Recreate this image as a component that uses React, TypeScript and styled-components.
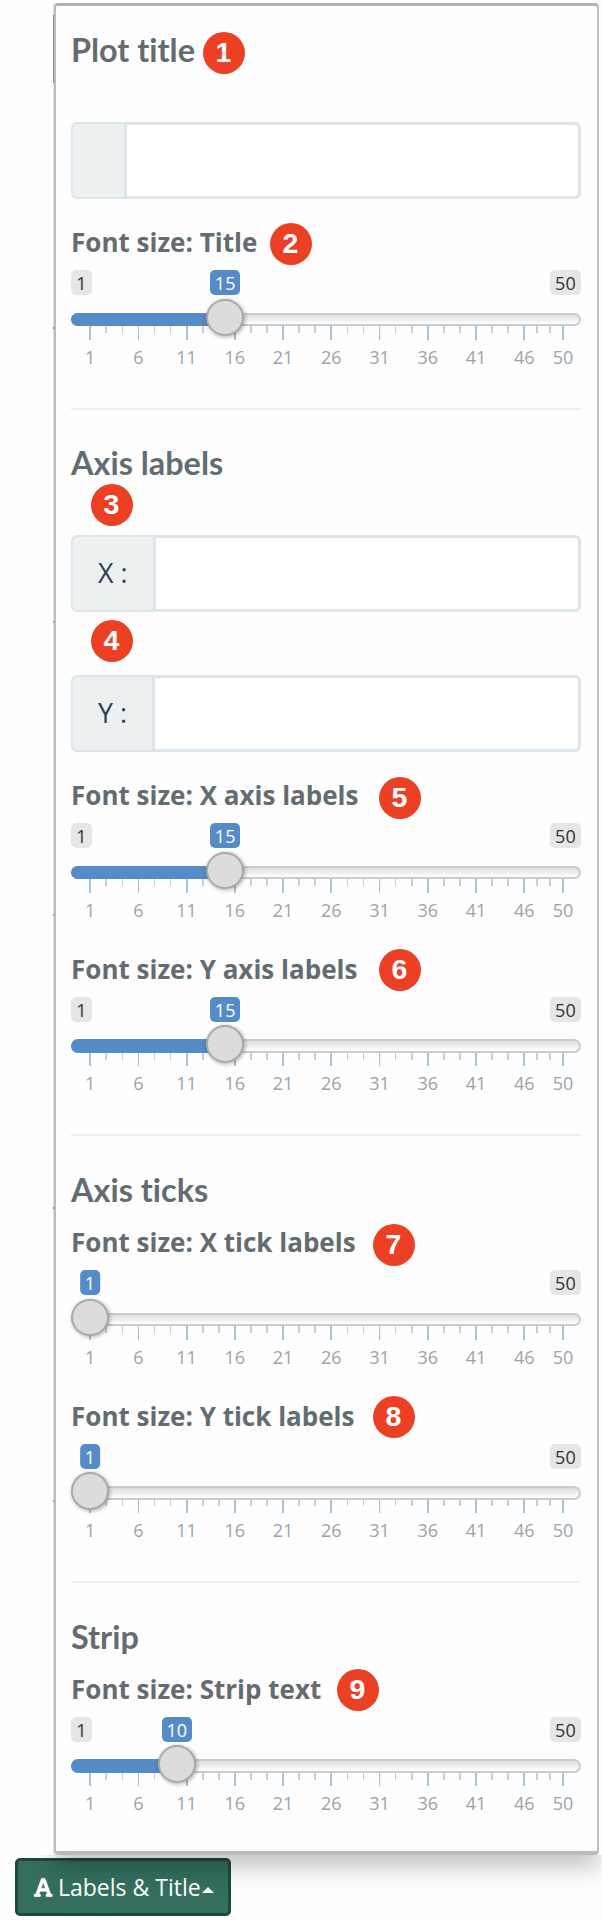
import React from "react";
import styled, { createGlobalStyle } from "styled-components";
import { FaFont } from "react-icons/fa";

const GlobalStyle = createGlobalStyle`
  * { box-sizing: border-box; }
  body { margin: 0; background: #fefefe; font-family: "Open Sans", sans-serif; }
`;

const Page = styled.main`
  width: 602px;
  height: 1920px;
  overflow: hidden;
  padding-top: 3px;
`;

const Frame = styled.div`
  display: flex;
  width: 546px;
  height: 1852px;
  margin-left: 53px;
`;

const PageEdge = styled.div`
  width: 1px;
  flex: none;
  background:
    linear-gradient(#8d8d8d, #8d8d8d) 0 12px / 1px 68px no-repeat,
    linear-gradient(#8d8d8d, #8d8d8d) 0 324px / 1px 2px no-repeat,
    linear-gradient(#8d8d8d, #8d8d8d) 0 618px / 1px 2px no-repeat,
    linear-gradient(#8d8d8d, #8d8d8d) 0 911px / 1px 2px no-repeat,
    linear-gradient(#8d8d8d, #8d8d8d) 0 1204px / 1px 2px no-repeat,
    linear-gradient(#8d8d8d, #8d8d8d) 0 1497px / 1px 2px no-repeat,
    #e3e3e3;
`;

const Panel = styled.section`
  width: 545px;
  height: 1852px;
  flex: none;
  padding: 22px 16px 0 15px;
  background: #fefefe;
  border: 2px solid #bcbcbc;
  border-top: 3px solid #b2b2b2;
  border-bottom: 4px solid #bbb;
  border-radius: 4px;
`;

const Heading = styled.h4<{ $top?: number; $bottom?: number }>`
  display: flex;
  height: 42px;
  margin: ${(p) => p.$top ?? 0}px 0 ${(p) => p.$bottom ?? 0}px;
  font: 700 32.4px/44px Lato, sans-serif;
  font-variant-ligatures: none;
  color: #636d71;
  white-space: nowrap;
`;

const HeadingText = styled.span`
  flex: none;
  width: 132px;
`;

const Marker = styled.span<{ $left: number; $top?: number }>`
  display: block;
  flex: none;
  width: 42px;
  height: 42px;
  margin-left: ${(p) => p.$left}px;
  margin-top: ${(p) => p.$top ?? 0}px;
  padding-right: 1px;
  border-radius: 50%;
  background: #ec4025;
  color: #fff;
  font: 700 28.5px/41px "Liberation Sans", sans-serif;
  text-align: center;
`;

const InputGroup = styled.label<{ $top?: number }>`
  display: flex;
  height: 77px;
  margin-top: ${(p) => p.$top ?? 0}px;
`;

const Addon = styled.span<{ $width: number }>`
  width: ${(p) => p.$width}px;
  flex: none;
  padding-left: 25px;
  background: #ecf0f1;
  border: 2px solid #dce4ec;
  border-right: 0;
  border-radius: 6px 0 0 6px;
  color: #2c3e50;
  font-size: 26.8px;
  line-height: 72px;
  white-space: pre;
`;

const TextInput = styled.input`
  flex: 1;
  min-width: 0;
  padding: 0 20px;
  border: 3px solid #dce4ec;
  border-radius: 0 6px 6px 0;
  background: #fff;
  font: 27px "Open Sans", sans-serif;
  color: #2c3e50;
  outline: none;
`;

const Divider = styled.hr<{ $top: number }>`
  height: 2px;
  margin: ${(p) => p.$top}px 0 0;
  border: 0;
  background: #ecf0f1;
`;

const Field = styled.div<{ $top: number }>`
  height: 149px;
  margin-top: ${(p) => p.$top}px;
`;

const LabelRow = styled.div`
  display: flex;
  align-items: flex-start;
  height: 42px;
`;

const Label = styled.span<{ $width: number }>`
  width: ${(p) => p.$width}px;
  flex: none;
  font-size: 26.03px;
  font-weight: 700;
  line-height: 42px;
  color: #636d71;
  white-space: nowrap;
`;

const SliderBox = styled.div`
  position: relative;
  height: 107px;
  padding-top: 7px;
`;

const Limits = styled.div`
  display: flex;
  justify-content: space-between;
  height: 25.3px;
`;

const Limit = styled.span<{ $hidden?: boolean }>`
  height: 25.3px;
  padding: 0 5.3px;
  border-radius: 5px;
  background: #e6e6e6;
  color: #333;
  font-size: 18px;
  line-height: 26px;
  visibility: ${(p) => (p.$hidden ? "hidden" : "visible")};
`;

const Current = styled.span`
  position: absolute;
  top: 7px;
  height: 25.3px;
  padding: 0 4.7px;
  border-radius: 5px;
  background: #558bc7;
  color: #fff;
  font-size: 18px;
  line-height: 26px;
  transform: translateX(-50%);
`;

const Track = styled.div`
  height: 13.6px;
  margin-top: 17.3px;
  border: 2px solid #ccc;
  border-radius: 7px;
  background: linear-gradient(#dedede, #fff);
`;

const Fill = styled.div`
  position: absolute;
  left: 0;
  top: 49.6px;
  height: 13.6px;
  border-radius: 7px 0 0 7px;
  background: #558bc7;
`;

const Handle = styled.div`
  position: absolute;
  top: 35.7px;
  width: 38px;
  height: 37.6px;
  margin-left: -19px;
  border: 2px solid #aaa;
  border-radius: 50%;
  background: #dcdcdc;
  box-shadow: 1px 1px 4px rgba(0, 0, 0, 0.32);
`;

const Ticks = styled.div`
  display: flex;
  height: 14px;
`;

const Tick = styled.i<{ $gap: number; $width: number; $major: boolean }>`
  flex: none;
  width: ${(p) => p.$width}px;
  height: ${(p) => (p.$major ? 13.6 : 6.7)}px;
  margin-left: ${(p) => p.$gap}px;
  background: ${(p) => (p.$major ? "#a6c2e3" : "#ccc")};
`;

const TickLabels = styled.div`
  display: flex;
  height: 26px;
  margin-top: 3.5px;
  margin-left: -5px;
`;

const TickLabel = styled.span<{ $last: boolean }>`
  flex: none;
  width: ${(p) => (p.$last ? 29.2 : 48.25)}px;
  color: #99a4ac;
  font-size: 18px;
  line-height: 26px;
  text-align: center;
`;

/* [left offset, width] of each mark on the scale; every third one is major */
const marks: [number, number][] = [
  [18, 2], [34, 2], [51, 1], [67, 1], [83, 1], [99, 1], [115, 2], [131, 2], [147, 2],
  [163, 2], [179, 2], [195, 2], [211, 2], [227, 2], [243, 2], [259, 2], [276, 1], [292, 1],
  [308, 1], [324, 1], [340, 2], [356, 2], [372, 2], [388, 2], [404, 2], [420, 2], [436, 2],
  [452, 2], [465, 2], [478, 2], [491, 2],
];
const scale = [1, 6, 11, 16, 21, 26, 31, 36, 41, 46, 50];

function Slider({ value }: { value: number }) {
  const x = 19 + ((value - 1) / 49) * 473;
  return (
    <SliderBox>
      <Limits>
        <Limit $hidden={value === 1}>1</Limit>
        <Limit>50</Limit>
      </Limits>
      <Current style={{ left: x }}>{value}</Current>
      <Track />
      {value > 1 && <Fill style={{ width: x }} />}
      <Ticks>
        {marks.map(([left, width], i) => (
          <Tick
            key={left}
            $gap={i ? left - marks[i - 1][0] - marks[i - 1][1] : left}
            $width={width}
            $major={i % 3 === 0}
          />
        ))}
      </Ticks>
      <TickLabels>
        {scale.map((n) => (
          <TickLabel key={n} $last={n === 50}>{n}</TickLabel>
        ))}
      </TickLabels>
      <Handle style={{ left: x }} />
    </SliderBox>
  );
}

interface SizeFieldProps {
  label: string;
  value: number;
  marker: number;
  top: number;
  markerX: number;
  markerY?: number;
}

function SizeField({ label, value, marker, top, markerX, markerY }: SizeFieldProps) {
  return (
    <Field $top={top}>
      <LabelRow>
        <Label $width={markerX}>{label}</Label>
        <Marker $left={0} $top={markerY}>{marker}</Marker>
      </LabelRow>
      <Slider value={value} />
    </Field>
  );
}

const Footer = styled.footer`
  position: relative;
  height: 65px;
  padding: 3px 0 0 15px;
  overflow: hidden;
`;

const PanelShadow = styled.div`
  position: absolute;
  left: 54px;
  top: -60px;
  width: 545px;
  height: 60px;
  box-shadow: 0 12px 24px rgba(0, 0, 0, 0.24);
  pointer-events: none;
`;

const DropButton = styled.button`
  display: flex;
  align-items: center;
  width: 216px;
  height: 58px;
  padding: 0 0 0 15px;
  border: 3px solid #1f493c;
  border-radius: 5px;
  background: #336e5e;
  color: #fff;
  font: 23px "Open Sans", sans-serif;
  white-space: nowrap;
`;

const FontIcon = styled(FaFont)`
  flex: none;
  width: 20.5px;
  height: 21px;
  stroke: #fff;
  stroke-width: 8px;
`;

const ButtonText = styled.span`
  flex: none;
  width: 138px;
  margin-left: 4.5px;
`;

const Caret = styled.i`
  flex: none;
  margin: 5px 0 0 5.5px;
  border: 6px solid transparent;
  border-top: 0;
  border-bottom-color: #fff;
`;

export default function App() {
  return (
    <Page>
      <GlobalStyle />
      <Frame>
        <PageEdge />
        <Panel>
          <Heading $bottom={52}>
            <HeadingText>Plot title</HeadingText>
            <Marker $left={0} $top={4}>1</Marker>
          </Heading>
          <InputGroup>
            <Addon $width={53} />
            <TextInput aria-label="Plot title" />
          </InputGroup>
          <SizeField label="Font size: Title" value={15} marker={2} top={22} markerX={199} markerY={2} />
          <Divider $top={38} />

          <Heading $top={31} $bottom={1}>Axis labels</Heading>
          <Marker $left={20}>3</Marker>
          <InputGroup $top={9}>
            <Addon $width={82}>X :</Addon>
            <TextInput />
          </InputGroup>
          <Marker $left={20} $top={8}>4</Marker>
          <InputGroup $top={13}>
            <Addon $width={81}>Y :</Addon>
            <TextInput />
          </InputGroup>
          <SizeField label="Font size: X axis labels" value={15} marker={5} top={22.2} markerX={308} markerY={3} />
          <SizeField label="Font size: Y axis labels" value={15} marker={6} top={24.5} markerX={308} markerY={1} />
          <Divider $top={37.3} />

          <Heading $top={32} $bottom={11}>Axis ticks</Heading>
          <SizeField label="Font size: X tick labels" value={1} marker={7} top={0} markerX={302} markerY={3} />
          <SizeField label="Font size: Y tick labels" value={1} marker={8} top={24.6} markerX={302} markerY={1} />
          <Divider $top={37.4} />

          <Heading $top={32} $bottom={10.7}>Strip</Heading>
          <SizeField label="Font size: Strip text" value={10} marker={9} top={0} markerX={266} markerY={1} />
        </Panel>
      </Frame>
      <Footer>
        <DropButton>
          <FontIcon />
          <ButtonText>Labels &amp; Title</ButtonText>
          <Caret />
        </DropButton>
        <PanelShadow />
      </Footer>
    </Page>
  );
}
